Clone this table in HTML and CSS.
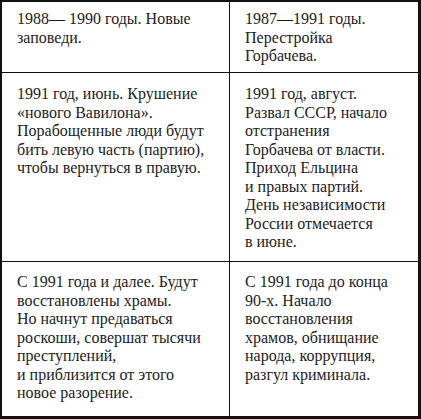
FILE: index.html
```html
<!DOCTYPE html>
<html lang="ru">
<head>
<meta charset="utf-8">
<link rel="stylesheet" href="styles.css">
</head>
<body>
<div class="table">
  <div class="cell left r1">1988— 1990 годы. Новые<br>заповеди.</div>
  <div class="cell right r1">1987—1991 годы.<br>Перестройка<br>Горбачева.</div>
  <div class="cell left r2">1991 год, июнь. Крушение<br>«нового Вавилона».<br>Порабощенные люди будут<br>бить левую часть (партию),<br>чтобы вернуться в правую.</div>
  <div class="cell right r2">1991 год, август.<br>Развал СССР, начало<br>отстранения<br>Горбачева от власти.<br>Приход Ельцина<br>и правых партий.<br>День независимости<br>России отмечается<br>в июне.</div>
  <div class="cell left r3">С 1991 года и далее. Будут<br>восстановлены храмы.<br>Но начнут предаваться<br>роскоши, совершат тысячи<br>преступлений,<br>и приблизится от этого<br>новое разорение.</div>
  <div class="cell right r3">С 1991 года до конца<br>90-х. Начало<br>восстановления<br>храмов, обнищание<br>народа, коррупция,<br>разгул криминала.</div>
</div>
</body>
</html>
```
FILE: styles.css
```css
html, body {
  margin: 0;
  padding: 0;
  background: #fff;
}
.table {
  box-sizing: border-box;
  width: 421px;
  height: 419px;
  border-style: solid;
  border-color: #111;
  border-width: 2px 3px 3px 2px;
  display: grid;
  grid-template-columns: 228px 1fr;
  grid-template-rows: 71px 189px 1fr;
  font-family: "Liberation Serif", serif;
  font-size: 16px;
  line-height: 18.5px;
  color: #1c1c1c;
}
.cell {
  box-sizing: border-box;
  white-space: nowrap;
  overflow: hidden;
}
.left {
  border-right: 1px solid #111;
  padding-left: 15px;
}
.right {
  padding-left: 15px;
}
.r1, .r2 {
  border-bottom: 1px solid #111;
}
.r1 { padding-top: 8px; }
.r2 { padding-top: 12px; }
.r3 { padding-top: 11px; }
```
